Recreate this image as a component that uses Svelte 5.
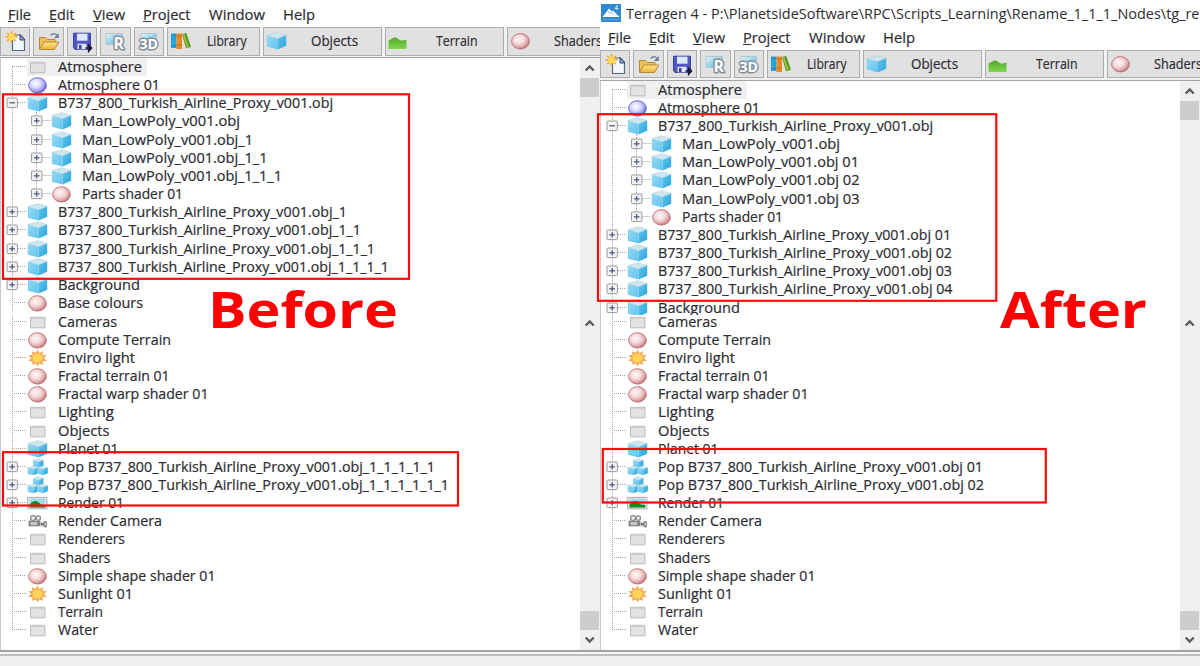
<script>
  const obj = 'B737_800_Turkish_Airline_Proxy_v001.obj';
  const man = 'Man_LowPoly_v001.obj';

  const row = (text, w, icon = 'folder', exp = '', depth = 0) => ({ text, w, icon, exp, depth });

  const head = [
    { ...row('Atmosphere', 84), first: true, selected: true },
    row('Atmosphere 01', 102, 'blue'),
    row(obj, 275, 'cube', '-')
  ];
  const beforeTop = [
    ...head,
    row(man, 158, 'cube', '+', 1),
    row(man + '_1', 171, 'cube', '+', 1),
    row(man + '_1_1', 185.5, 'cube', '+', 1),
    row(man + '_1_1_1', 200, 'cube', '+', 1),
    { ...row('Parts shader 01', 101, 'ball', '+', 1), end: true },
    row(obj + '_1', 289, 'cube', '+'),
    row(obj + '_1_1', 303, 'cube', '+'),
    row(obj + '_1_1_1', 317, 'cube', '+'),
    row(obj + '_1_1_1_1', 331, 'cube', '+'),
    row('Background', 82, 'cube', '+'),
    row('Base colours', 85, 'ball')
  ];
  const afterTop = [
    ...head,
    row(man, 158, 'cube', '+', 1),
    row(man + ' 01', 177, 'cube', '+', 1),
    row(man + ' 02', 177.5, 'cube', '+', 1),
    row(man + ' 03', 177.5, 'cube', '+', 1),
    { ...row('Parts shader 01', 101, 'ball', '+', 1), end: true },
    row(obj + ' 01', 293, 'cube', '+'),
    row(obj + ' 02', 294, 'cube', '+'),
    row(obj + ' 03', 294, 'cube', '+'),
    row(obj + ' 04', 294.5, 'cube', '+'),
    row('Background', 82, 'cube', '+')
  ];
  const bottom = (s1, s2, w1, w2) => [
    row('Cameras', 59),
    row('Compute Terrain', 113, 'ball'),
    row('Enviro light', 77, 'sun'),
    row('Fractal terrain 01', 111.5, 'ball'),
    row('Fractal warp shader 01', 150.5, 'ball'),
    row('Lighting', 56),
    row('Objects', 51.5),
    row('Planet 01', 60.5, 'cube'),
    row('Pop ' + obj + s1, w1, 'cubes', '+'),
    row('Pop ' + obj + s2, w2, 'cubes', '+'),
    row('Render 01', 66, 'image', '+'),
    row('Render Camera', 104, 'camera'),
    row('Renderers', 67),
    row('Shaders', 52.5),
    row('Simple shape shader 01', 157.5, 'ball'),
    row('Sunlight 01', 75, 'sun'),
    row('Terrain', 45),
    { ...row('Water', 40), end: true }
  ];

  const panels = [
    { title: '', top: beforeTop, bottom: bottom('_1_1_1_1_1', '_1_1_1_1_1_1', 377, 391) },
    {
      title: 'Terragen 4 - P:\\PlanetsideSoftware\\RPC\\Scripts_Learning\\Rename_1_1_1_Nodes\\tg_re',
      top: afterTop,
      bottom: bottom(' 01', ' 02', 325, 326)
    }
  ];

  const menus = [
    ['File', 23, 18],
    ['Edit', 25.5, 18.5],
    ['View', 32, 18],
    ['Project', 47.5, 18.5],
    ['Window', 56, 18],
    ['Help', 32, 0]
  ];
  const tools = ['new', 'open', 'save', 'render', 'view3d'];
  const wide = [
    { label: 'Library', icon: 'books', w: 93.5, x: 39.5, tw: 39.5 },
    { label: 'Objects', icon: 'cube', w: 119, x: 47.5, tw: 47 },
    { label: 'Terrain', icon: 'hill', w: 119, x: 50, tw: 41.5 },
    { label: 'Shaders', icon: 'ball', w: 119, x: 46, tw: 48 }
  ];
</script>

{#snippet label(text, w, size = 14, base = 14.1, under = false)}
  <svg class="label" width={w + 2} height="18.17" style:font-size="{size}px">
    <text x="0" y={base} textLength={w} lengthAdjust="spacingAndGlyphs">{text}</text>
    {#if under}<path d="M0 15.5h{text[0] === 'F' || text[0] === 'E' ? 7 : 8.5}" stroke="#333" />{/if}
  </svg>
{/snippet}

{#snippet gutter(r)}
  {@const x = r.depth ? 36.5 : 12}
  <svg class="gutter" width={r.depth ? 51 : 27} height="18.17">
    <g class="guide">
      {#if r.depth}
        <path d="M12.5 0V18.2" />
        <path d="M{x} 0V{r.end ? 9 : 18.2}" />
      {:else}
        <path d="M12.5 {r.first ? 9 : 0}V{r.end ? 9 : 18.2}" />
      {/if}
      <path d="M{x} 8.5h14.5" />
    </g>
    {#if r.exp}
      <rect x={x - 5} y="4" width="10.4" height="9.6" rx="1" fill="#f2f2f2" stroke="#999" />
      <path d="M{x - 2.6} 8.8h5.6" stroke="#465682" stroke-width="1.2" />
      {#if r.exp === '+'}<path d="M{x + 0.2} 6v5.6" stroke="#465682" stroke-width="1.2" />{/if}
    {/if}
  </svg>
{/snippet}

{#snippet rows(list)}
  {#each list as r}
    <div class="row">
      {@render gutter(r)}
      <div class="item" class:selected={r.selected}>
        <svg class="icon" width="21" height="18.17" viewBox="0 0 21 18"><use href="#i-{r.icon}" /></svg>
        {@render label(r.text, r.w)}
      </div>
    </div>
  {/each}
{/snippet}

{#snippet arrow(up)}
  <svg class="arrow" width="20" height="20">
    <path d={up ? 'M5.7 12.500l4-4 4 4' : 'M5.7 7.500l4 4 4-4'} fill="none" stroke="#5c5c5c" stroke-width="2.4" />
  </svg>
{/snippet}

<svg class="defs" width="0" height="0" aria-hidden="true">
  <defs>
    <radialGradient id="g-red" cx=".4" cy=".38" r=".65">
      <stop offset="0" stop-color="#fff6f6" /><stop offset=".45" stop-color="#f3dada" />
      <stop offset=".78" stop-color="#dfa3a5" /><stop offset="1" stop-color="#b9666a" />
    </radialGradient>
    <radialGradient id="g-blue" cx=".4" cy=".38" r=".65">
      <stop offset="0" stop-color="#fff" /><stop offset=".45" stop-color="#d5d9ff" />
      <stop offset=".8" stop-color="#9298ee" /><stop offset="1" stop-color="#4b50b8" />
    </radialGradient>
    <linearGradient id="g-side" x1="0" x2="1" y1="0" y2="1">
      <stop offset="0" stop-color="#5cc4ec" /><stop offset="1" stop-color="#2fa4dc" />
    </linearGradient>
    <linearGradient id="g-front" x1="0" x2="1" y1="0" y2="1">
      <stop offset="0" stop-color="#93d8f4" /><stop offset="1" stop-color="#62c5ee" />
    </linearGradient>
    <linearGradient id="g-folder" x1="0" x2="0" y1="0" y2="1">
      <stop offset="0" stop-color="#ffe58a" /><stop offset="1" stop-color="#edb13a" />
    </linearGradient>
    <linearGradient id="g-hill" x1="0" x2="0" y1="0" y2="1">
      <stop offset="0" stop-color="#52a92e" /><stop offset="1" stop-color="#7fd648" />
    </linearGradient>
    <linearGradient id="g-win" x1="0" x2="1" y1="0" y2="1">
      <stop offset="0" stop-color="#e2f5fb" /><stop offset="1" stop-color="#4fb4dd" />
    </linearGradient>
    <symbol id="i-folder" viewBox="0 0 21 18">
      <path d="M3.500 4.200h14.500v10.600H3.500z" fill="#e2e2e2" stroke="#bcbcbc" />
      <path d="M4 5.200h13.500" stroke="#cecece" />
    </symbol>
    <symbol id="i-ball" viewBox="0 0 21 18">
      <ellipse cx="10.5" cy="9.3" rx="8.900" ry="7.700" fill="url(#g-red)" stroke="#bd7074" stroke-width=".9" />
    </symbol>
    <symbol id="i-blue" viewBox="0 0 21 18">
      <ellipse cx="10.5" cy="9.3" rx="8.900" ry="7.700" fill="url(#g-blue)" stroke="#6266c2" stroke-width=".9" />
    </symbol>
    <symbol id="i-cube" viewBox="0 0 21 18">
      <path d="M.8 3.600L10.500.600l9.700 2.700-8.600 3.500z" fill="#cfe5ed" stroke="#a3cad8" stroke-width=".5" />
      <path d="M.8 3.600l10.800 3.200v10.700L.8 14.600z" fill="url(#g-front)" />
      <path d="M20.200 3.300l-8.600 3.500v10.700l8.600-3.800z" fill="url(#g-side)" />
    </symbol>
    <symbol id="i-cubes" viewBox="0 0 21 18">
      <use href="#i-cube" x="5.500" y=".2" width="11.500" height="9.700" />
      <use href="#i-cube" x="0" y="7.500" width="12" height="10" />
      <use href="#i-cube" x="9.500" y="7.500" width="12" height="10" />
    </symbol>
    <symbol id="i-sun" viewBox="0 0 21 18">
      <path d="M10.500 .5l1.800 3.300 3.800-1.700-.7 3.700 4.600.4-3.300 2.800 3.300 2.800-4.600.4.700 3.700-3.800-1.700-1.800 3.300-1.800-3.300-3.800 1.700.7-3.700L1 11.800 4.300 9 1 6.200l4.600-.4-.7-3.700 3.800 1.700z" fill="#f6a655" />
      <ellipse cx="10.500" cy="9" rx="5.600" ry="5" fill="#ffd45a" stroke="#f4a64a" stroke-width=".8" />
    </symbol>
    <symbol id="i-image" viewBox="0 0 21 18">
      <path d="M.7 3.300h19.200v11.400H.7z" fill="#eee" stroke="#aaa" />
      <path d="M2.500 4.500h15.800v9H2.500z" fill="#a0dcf1" />
      <path d="M2.500 10.500q3-4 6-3.500 4 1 5 3.500l4.800.5v2.500H2.500z" fill="#16891d" />
    </symbol>
    <symbol id="i-camera" viewBox="0 0 21 18">
      <circle cx="6" cy="6" r="2.400" fill="#f3f3f3" stroke="#848484" stroke-width="1.200" />
      <circle cx="11.300" cy="6" r="2.200" fill="#f3f3f3" stroke="#848484" stroke-width="1.200" />
      <path d="M1.500 8.500h12v5.700h-12z" fill="#858585" />
      <path d="M3.500 10h6.500v2.800H3.500z" fill="#c9c9c9" />
      <path d="M14 10.300l2.500.7V9.200h3.300v6h-3.300v-1.900l-2.500.3z" fill="#777" />
      <path d="M17.500 10.500h1.200v3.300h-1.200z" fill="#ddd" />
    </symbol>
    <symbol id="i-hill" viewBox="0 0 21 18">
      <path d="M.5 8.500Q4 6.500 6.500 5.300q2.500 0 5.500 3 3 .5 6.500-.8V17H.5z" fill="url(#g-hill)" />
    </symbol>
    <symbol id="i-books" viewBox="0 0 21 18">
      <path d="M1 1.500h5.500V16H1z" fill="#2ba3d6" /><path d="M1 3h5.500M1 13.500h5.500" stroke="#2585b2" />
      <path d="M6.500 1.500h5.500V17H6.500z" fill="#ee8a26" /><path d="M6.500 4h5.500M6.500 13h5.500" stroke="#c46a1e" />
      <path d="M12 2l4.300-1 4.700 14-5 1.200z" fill="#4c9c22" /><path d="M13.500 2l4.500 13.500" stroke="#b7b83f" stroke-width="1.800" />
    </symbol>
    <symbol id="i-new" viewBox="0 0 28 26">
      <path d="M11.500 7h8l4 4.500v11h-12z" fill="#f1f6ff" stroke="#55658c" stroke-width="1.200" />
      <path d="M19 6.500v5.500h5z" fill="#8fa3cf" stroke="#374974" />
      <path d="M10.500 3v12M4.500 9h12M6.200 5l8.500 8M14.700 5l-8.500 8" stroke="#f7a524" stroke-width="1.600" />
      <circle cx="10.500" cy="9" r="3.300" fill="#ffdc52" />
    </symbol>
    <symbol id="i-open" viewBox="0 0 28 26">
      <path d="M4.500 21V9.500h6l2 2h7.500v3" fill="#eec058" stroke="#b48a35" />
      <path d="M4.500 21.500L9 14h14.800l-4.300 7.500z" fill="url(#g-folder)" stroke="#b48a35" />
      <path d="M15.500 7.500q3.500-3.500 6.500-.2" fill="none" stroke="#7484a5" stroke-width="1.400" />
      <path d="M23.800 5v5h-5z" fill="#6b7b9d" />
    </symbol>
    <symbol id="i-save" viewBox="0 0 28 26">
      <path d="M5.500 5.200h17V21.500H7L5.500 19.700z" fill="#5058c4" stroke="#3b429d" />
      <path d="M9 5.700h10.500v7H9z" fill="#dcebfc" />
      <path d="M9.500 15.800h9v5.500h-9z" fill="#e2e4f3" /><path d="M11 17h2.500v4H11z" fill="#363d9c" />
      <path d="M17.500 20h6M20.700 17.200v6l2.800-3.200z" fill="#191f35" stroke="#191f35" stroke-width="1.600" />
    </symbol>
    <symbol id="i-render" viewBox="0 0 28 26">
      <path d="M5 5.500h16.500V16.500H5z" fill="url(#g-win)" stroke="#b7c6cd" />
      <text x="12.500" y="21" font-family="Open Sans" font-weight="700" font-size="15.500" fill="#fff" stroke="#87919a" stroke-width="3" stroke-linejoin="round" paint-order="stroke" textLength="10.500" lengthAdjust="spacingAndGlyphs">R</text>
    </symbol>
    <symbol id="i-view3d" viewBox="0 0 28 26">
      <path d="M6 5.500h15.500V16.500H6z" fill="url(#g-win)" stroke="#b7c6cd" />
      <text x="4.500" y="20.800" font-family="Open Sans" font-weight="700" font-size="15" fill="#fff" stroke="#87919a" stroke-width="3" stroke-linejoin="round" paint-order="stroke" textLength="18.500" lengthAdjust="spacingAndGlyphs">3D</text>
    </symbol>
  </defs>
</svg>

<main>
  <div class="panels">
    {#each panels as p}
      <section>
        {#if p.title}
          <header>
            <svg width="20" height="18" viewBox="0 0 20 18">
              <path d="M0 0h20v18H0z" fill="#3189d0" />
              <path d="M1.500 13L8 4.500l3 3 1-1 6.500 6.500z" fill="#fff" />
              <path d="M7 7l1.500 2 2-1 3 3" fill="none" stroke="#8ac0ea" />
              <path d="M2 15.600h16" stroke="#70b0e2" stroke-dasharray="1.500 .6" />
              <path d="M16 1.500v4.500M16.300 1.500L14 4.500h3.500" fill="none" stroke="#d8ecfb" stroke-width=".9" />
            </svg>
            {@render label(p.title, 573.5, 14.2, 13.800)}
          </header>
        {/if}
        <nav>
          {#each menus as [text, w, gap], i}
            <span style:margin-right="{gap - 2}px">{@render label(text, w, 14, 13.900, i < 4)}</span>
          {/each}
        </nav>
        <div class="toolbar">
          {#each tools as t}
            <button aria-label={t}><svg width="28" height="26"><use href="#i-{t}" /></svg></button>
          {/each}
          {#each wide as b}
            <button class="wide" style:width="{b.w}px">
              <svg width="21" height="18" viewBox="0 0 21 18"><use href="#i-{b.icon}" /></svg>
              <span style:margin-left="{b.x - 23.500}px">{@render label(b.label, b.tw, 14)}</span>
            </button>
          {/each}
        </div>
        <div class="view upper">
          <div class="tree">{@render rows(p.top)}</div>
          <div class="scroll">{@render arrow(true)}<i></i></div>
        </div>
        <div class="view lower">
          <div class="tree">{@render rows(p.bottom)}</div>
          <div class="scroll">{@render arrow(true)}<b></b><i></i>{@render arrow(false)}</div>
        </div>
      </section>
    {/each}
  </div>
  <footer></footer>

  <svg class="marks" width="1200" height="666">
    <g fill="none" stroke="#fb0a0a" stroke-width="2.200">
      <rect x="3" y="94.300" width="406" height="184.500" />
      <rect x="3" y="452.200" width="455" height="53.300" />
      <rect x="598" y="114.200" width="398.300" height="186.600" />
      <rect x="602.800" y="449" width="443" height="53.500" />
    </g>
    <text x="208" y="328" textLength="190" lengthAdjust="spacingAndGlyphs">Before</text>
    <text x="1000" y="328" textLength="147" lengthAdjust="spacingAndGlyphs">After</text>
  </svg>
</main>

<style>
  :global(body) { margin: 0; }
  main {
    position: relative;
    width: 1200px;
    height: 666px;
    overflow: hidden;
    background: #f0f0f0;
    font-family: 'Open Sans', 'Noto Sans', sans-serif;
  }
  svg { display: block; flex: none; }
  .defs { position: absolute; }
  .panels { display: flex; height: 650px; }
  section {
    width: 600px;
    height: 650px;
    display: flex;
    flex-direction: column;
    overflow: hidden;
    background: #fff;
  }
  header {
    display: flex;
    height: 22.670px;
    flex: none;
    align-items: flex-start;
    gap: 5px;
    padding: 4px 0 0 1px;
    box-sizing: border-box;
  }
  header .label { margin-top: 1px; }
  nav {
    display: flex;
    height: 27px;
    flex: none;
    padding: 6px 0 0 8px;
    box-sizing: border-box;
  }
  .label { overflow: visible; }
  .label text { fill: #2c2c32; stroke: #2c2c32; stroke-width: .2px; }
  header .label text { stroke: none; }
  .toolbar {
    display: flex;
    flex: none;
    gap: 3px;
    height: 31px;
    box-sizing: border-box;
    border-bottom: 1.500px solid #a3a3ad;
    background: #f1f1f3;
    overflow: hidden;
  }
  button {
    width: 30.400px;
    height: 28.500px;
    flex: none;
    display: flex;
    align-items: center;
    justify-content: center;
    padding: 0;
    border: 1px solid #adadad;
    box-sizing: border-box;
    background: #e1e1e1;
    font: inherit;
  }
  .wide { justify-content: flex-start; padding-left: 2px; }
  .view { display: flex; overflow: hidden; border-left: 1px solid #c9c9cd; }
  .upper { flex: 1; min-height: 0; }
  .lower { height: 335.300px; flex: none; }
  .lower .tree { margin-top: -2.100px; }
  .tree { flex: 1; min-width: 0; margin-left: -1px; }
  .row { display: flex; height: 18.170px; }
  .item { display: flex; gap: 10px; }
  .selected { background: #f0f0f0; padding-right: 3px; }
  .guide path { stroke: #a5a5a5; stroke-dasharray: 1 1; fill: none; }
  .scroll {
    width: 20px;
    flex: none;
    display: flex;
    flex-direction: column;
    background: #f0f0f0;
  }
  .scroll i { height: 19px; margin-right: 1px; background: #cdcdcd; }
  .scroll b { flex: 1; }
  .lower .scroll svg:first-child { margin-top: -2px; }
  footer {
    height: 16px;
    box-sizing: border-box;
    border-top: 2px solid #a2a2aa;
    background: linear-gradient(#f7f7f7 2px, #bdbdb9 2px, #bdbdb9 3.500px, #f0f0f0 3.500px);
  }
  .marks { position: absolute; inset: 0; pointer-events: none; }
  .marks text { font-size: 51px; font-weight: 700; fill: #f00; }
</style>
